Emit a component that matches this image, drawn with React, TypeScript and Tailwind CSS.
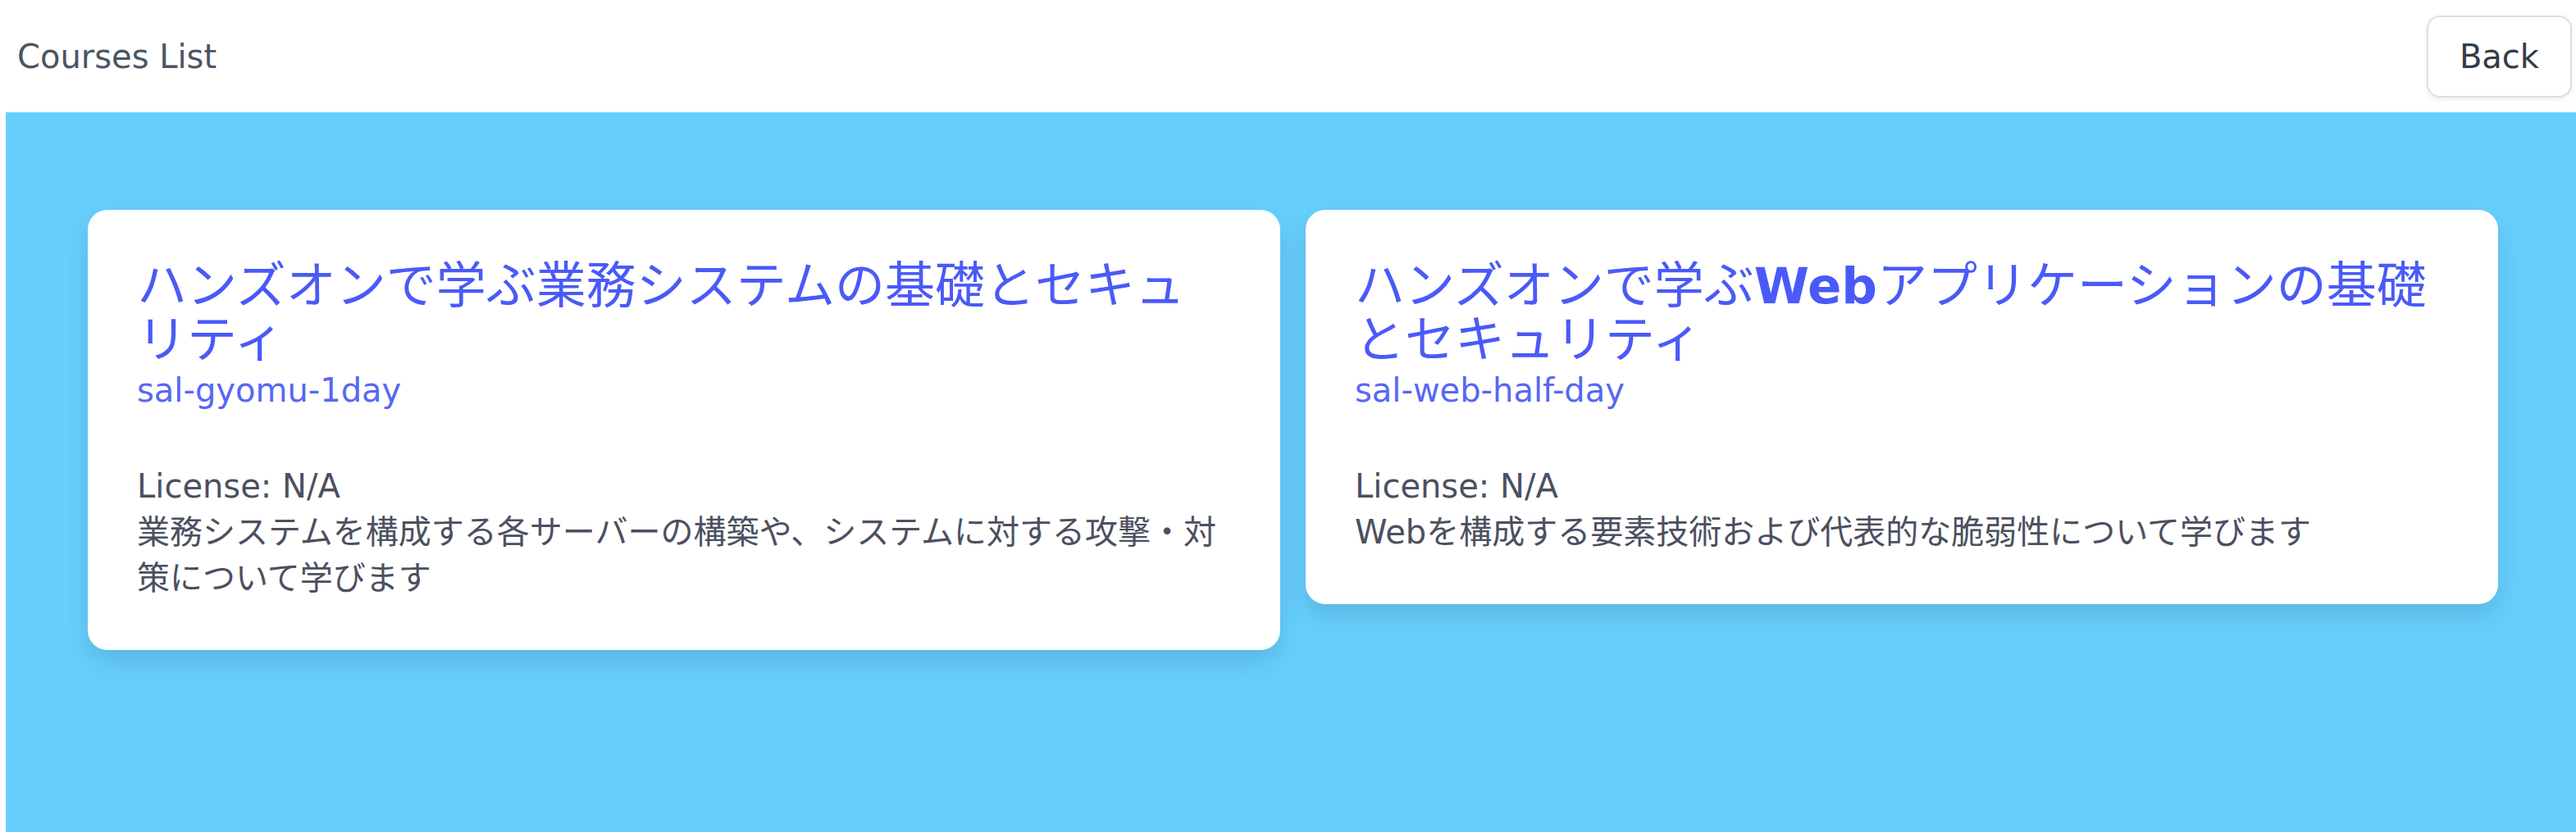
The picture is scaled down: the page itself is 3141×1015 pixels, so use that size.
const courses = [
  {
    id: 'sal-gyomu-1day',
    title: <>ハンズオンで学ぶ業務システムの基礎とセキュリティ</>,
    license: 'N/A',
    description:
      '業務システムを構成する各サーバーの構築や、システムに対する攻撃・対策について学びます',
  },
  {
    id: 'sal-web-half-day',
    title: (
      <>
        ハンズオンで学ぶ<span className="font-bold">Web</span>
        アプリケーションの基礎とセキュリティ
      </>
    ),
    license: 'N/A',
    description: 'Webを構成する要素技術および代表的な脆弱性について学びます',
  },
];

function CourseCard({ course }: { course: (typeof courses)[number] }) {
  return (
    <div className="rounded-[24px] bg-white py-[60px] pl-[60px] pr-[72px] shadow-[0_14px_32px_rgba(0,0,0,0.12)]">
      <h2 className="text-[61px] leading-[66px] text-[#4a5af8]">
        {course.title}
      </h2>
      <div className="text-[40px] leading-[56px] text-[#5767f3]">
        {course.id}
      </div>
      <div className="mt-[61px] text-[40px] leading-[56px] text-[#4b5060]">
        <p>License: {course.license}</p>
        <p>{course.description}</p>
      </div>
    </div>
  );
}

export default function App() {
  return (
    <div
      className="flex h-screen flex-col bg-white"
      style={{ fontFamily: '"DejaVu Sans", "Noto Sans CJK JP", sans-serif' }}
    >
      <header className="flex h-[137px] shrink-0 items-center justify-between pl-[21px] pr-[5px]">
        <h1 className="text-[40px] leading-[56px] text-[#4b5563]">
          Courses List
        </h1>
        <button className="rounded-[16px] border-2 border-[#dcdee6] bg-white px-[38px] py-[20px] text-[40px] leading-[56px] text-[#353b47] shadow-[0_2px_6px_rgba(0,0,0,0.08)]">
          Back
        </button>
      </header>
      <main className="ml-[7px] flex-1 bg-[#66cffd] pl-[100px] pr-[95px] pt-[119px]">
        <div className="grid grid-cols-2 items-start gap-[31px]">
          {courses.map((c) => (
            <CourseCard key={c.id} course={c} />
          ))}
        </div>
      </main>
    </div>
  );
}
